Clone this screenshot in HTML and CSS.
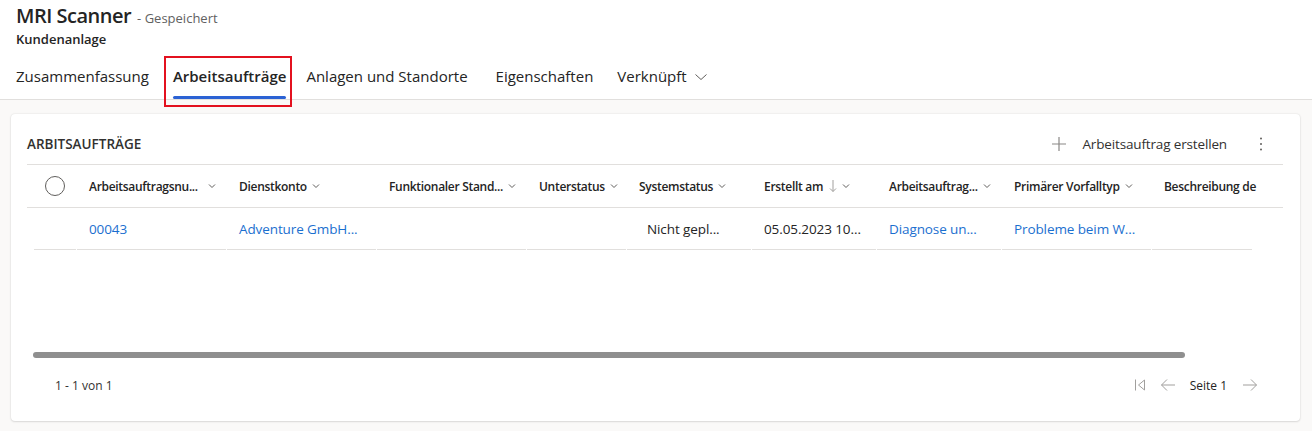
FILE: index.html
```html
<!DOCTYPE html>
<html lang="de">
<head>
<meta charset="utf-8">
<title>MRI Scanner - Kundenanlage</title>
<link rel="stylesheet" href="styles.css">
</head>
<body>
<header class="page-header">
  <div class="title-row">
    <h1 class="record-title">MRI Scanner</h1>
    <span class="save-state">- Gespeichert</span>
  </div>
  <div class="entity-name">Kundenanlage</div>
  <nav class="tabs">
    <a class="tab">Zusammenfassung</a>
    <a class="tab active">Arbeitsaufträge<span class="highlight"></span></a>
    <a class="tab">Anlagen und Standorte</a>
    <a class="tab">Eigenschaften</a>
    <a class="tab">Verknüpft
      <svg class="tab-chevron" width="12" height="12" viewBox="0 0 12 12"><path d="M0.5 3.5 L6 8.5 L11.5 3.5" fill="none" stroke="#605e5c" stroke-width="1"/></svg>
    </a>
  </nav>
</header>

<main class="content">
  <section class="card">
    <div class="toolbar">
      <h2 class="card-title">ARBITSAUFTRÄGE</h2>
      <button class="cmd">
        <svg width="16" height="16" viewBox="0 0 16 16"><path d="M8 1 V15 M1 8 H15" stroke="#8a8886" stroke-width="1.2" fill="none"/></svg>
        <span>Arbeitsauftrag erstellen</span>
      </button>
      <button class="more">
        <svg width="4" height="16" viewBox="0 0 4 16"><circle cx="2" cy="2.5" r="1" fill="#605e5c"/><circle cx="2" cy="8" r="1" fill="#605e5c"/><circle cx="2" cy="13.5" r="1" fill="#605e5c"/></svg>
      </button>
    </div>

    <div class="grid-head">
      <div class="viewport">
        <div class="row">
          <div class="cell col-check"><span class="check"></span></div>
          <div class="cell w150"><span class="h-text">Arbeitsauftragsnu...</span><svg class="chev wide" width="8" height="8" viewBox="0 0 8 8"><path d="M1 2.5 L4 5.5 L7 2.5" fill="none" stroke="#605e5c"/></svg></div>
          <div class="cell w150"><span class="h-text">Dienstkonto</span><svg class="chev" width="8" height="8" viewBox="0 0 8 8"><path d="M1 2.5 L4 5.5 L7 2.5" fill="none" stroke="#605e5c"/></svg></div>
          <div class="cell w150"><span class="h-text">Funktionaler Stand...</span><svg class="chev" width="8" height="8" viewBox="0 0 8 8"><path d="M1 2.5 L4 5.5 L7 2.5" fill="none" stroke="#605e5c"/></svg></div>
          <div class="cell w100"><span class="h-text">Unterstatus</span><svg class="chev" width="8" height="8" viewBox="0 0 8 8"><path d="M1 2.5 L4 5.5 L7 2.5" fill="none" stroke="#605e5c"/></svg></div>
          <div class="cell w125"><span class="h-text">Systemstatus</span><svg class="chev" width="8" height="8" viewBox="0 0 8 8"><path d="M1 2.5 L4 5.5 L7 2.5" fill="none" stroke="#605e5c"/></svg></div>
          <div class="cell w125"><span class="h-text">Erstellt am</span><svg class="sort" width="8" height="14" viewBox="0 0 8 14"><path d="M4 1 V12.5 M1 9.5 L4 12.5 L7 9.5" fill="none" stroke="#a19f9d" stroke-width="1"/></svg><svg class="chev" width="8" height="8" viewBox="0 0 8 8"><path d="M1 2.5 L4 5.5 L7 2.5" fill="none" stroke="#605e5c"/></svg></div>
          <div class="cell w125"><span class="h-text">Arbeitsauftrag...</span><svg class="chev" width="8" height="8" viewBox="0 0 8 8"><path d="M1 2.5 L4 5.5 L7 2.5" fill="none" stroke="#605e5c"/></svg></div>
          <div class="cell w150"><span class="h-text">Primärer Vorfalltyp</span><svg class="chev" width="8" height="8" viewBox="0 0 8 8"><path d="M1 2.5 L4 5.5 L7 2.5" fill="none" stroke="#605e5c"/></svg></div>
          <div class="cell w150"><span class="h-text">Beschreibung de</span></div>
        </div>
      </div>
    </div>

    <div class="grid-body">
      <div class="viewport">
        <div class="row">
          <div class="cell col-check"></div>
          <div class="cell w150"><a class="link">00043</a></div>
          <div class="cell w150"><a class="link">Adventure GmbH...</a></div>
          <div class="cell w150"></div>
          <div class="cell w100"></div>
          <div class="cell w125 option"><span>Nicht gepl...</span></div>
          <div class="cell w125"><span>05.05.2023 10...</span></div>
          <div class="cell w125"><a class="link">Diagnose un...</a></div>
          <div class="cell w150"><a class="link">Probleme beim W...</a></div>
          <div class="cell w100 last"></div>
        </div>
      </div>
    </div>

    <div class="hscroll"><div class="thumb"></div></div>

    <footer class="grid-footer">
      <span class="count">1 - 1 von 1</span>
      <div class="pager">
        <svg class="pg first" width="16" height="16" viewBox="0 0 16 16"><path d="M3.5 2.5 V13.5 M12.5 3 L6.5 8 L12.5 13 Z" fill="none" stroke="#a19f9d" stroke-width="1"/></svg>
        <svg class="pg back" width="16" height="16" viewBox="0 0 16 16"><path d="M15 8 H1.5 M7 2.5 L1.5 8 L7 13.5" fill="none" stroke="#a19f9d" stroke-width="1"/></svg>
        <span class="page-label">Seite 1</span>
        <svg class="pg next" width="16" height="16" viewBox="0 0 16 16"><path d="M1 8 H14.5 M9 2.5 L14.5 8 L9 13.5" fill="none" stroke="#a19f9d" stroke-width="1"/></svg>
      </div>
    </footer>
  </section>
</main>
</body>
</html>
```

FILE: styles.css
```css
* { box-sizing: border-box; margin: 0; padding: 0; }

body {
  font-family: "Open Sans", "Noto Sans", sans-serif;
  background: #faf9f8;
  color: #242424;
  width: 1312px;
  height: 431px;
  overflow: hidden;
}

/* ---------- header ---------- */
.page-header {
  background: #ffffff;
  border-bottom: 1px solid #e1dfdd;
  padding: 0 16px;
}

.title-row {
  display: flex;
  align-items: baseline;
  gap: 6px;
  height: 30px;
  padding-top: 3px;
}

.record-title {
  font-size: 20px;
  font-weight: 600;
  line-height: 26px;
  letter-spacing: -0.5px;
  color: #242424;
}

.save-state {
  font-size: 13px;
  color: #616161;
}

.entity-name {
  font-size: 13px;
  font-weight: 600;
  line-height: 18px;
  color: #242424;
}

.tabs {
  display: flex;
  height: 43px;
  margin: 8px 0 0 -12px;
}

.tab {
  position: relative;
  display: flex;
  align-items: flex-start;
  gap: 8px;
  padding: 10px 12px 0;
  font-size: 15px;
  line-height: 20px;
  color: #242424;
}

.tab.active {
  font-weight: 600;
  padding-right: 8px;
}

.tab.active + .tab {
  padding-right: 16px;
}

.tab.active::after {
  content: "";
  position: absolute;
  left: 12px;
  right: 8px;
  bottom: 0;
  height: 3px;
  border-radius: 2px;
  background: #2b62d4;
}

.tab .highlight {
  position: absolute;
  top: 0;
  bottom: -8px;
  left: 3px;
  right: 2px;
  border: 2px solid #e3111f;
  z-index: 2;
}

.tab-chevron {
  margin-top: 5px;
}

/* ---------- content ---------- */
.content {
  padding: 14px 12px 0 11px;
}

.card {
  background: #ffffff;
  border-radius: 4px;
  height: 307px;
  box-shadow: 0 0 2px rgba(0, 0, 0, 0.12), 0 1px 2px rgba(0, 0, 0, 0.10);
}

.toolbar {
  display: flex;
  align-items: center;
  height: 51px;
  padding-top: 9px;
  margin: 0 17px 0 16px;
  border-bottom: 1px solid #e1dfdd;
}

.card-title {
  font-size: 13.5px;
  font-weight: 600;
  color: #323130;
}

.cmd {
  margin-left: auto;
  display: flex;
  align-items: center;
  gap: 15px;
  background: none;
  border: none;
  font-family: inherit;
  font-size: 13.5px;
  letter-spacing: -0.15px;
  color: #323130;
}

.more {
  width: 32px;
  height: 32px;
  margin: 0 6px 0 18px;
  display: flex;
  align-items: center;
  justify-content: center;
  background: none;
  border: none;
}

/* ---------- grid ---------- */
.grid-head {
  height: 43px;
  margin: 0 17px 0 16px;
  border-bottom: 1px solid #e1dfdd;
}

.grid-body {
  height: 42px;
  margin: 0 17px 0 16px;
}

.viewport {
  margin-left: 7px;
  width: 1226px;
  height: 100%;
  overflow: hidden;
}

.row {
  display: flex;
  gap: 1px;
  height: 100%;
  width: max-content;
}

.cell {
  flex: none;
  display: flex;
  align-items: center;
  padding: 0 12px;
  white-space: nowrap;
  overflow: hidden;
}

.grid-body .cell {
  border-bottom: 1px solid #e1dfdd;
  font-size: 13.5px;
  letter-spacing: -0.1px;
  color: #242424;
}

.grid-head .cell {
  font-size: 12px;
  font-weight: 600;
  letter-spacing: -0.3px;
  color: #242424;
}

.col-check { width: 42px; justify-content: center; padding: 0; }
.w100 { width: 99px; }
.w125 { width: 124px; }
.w150 { width: 149px; }
.last { width: 100px; }

.check {
  width: 20px;
  height: 20px;
  border: 1px solid #605e5c;
  border-radius: 50%;
}

.h-text {
  flex: none;
}

.chev {
  margin-left: 5px;
  flex: none;
}

.chev.wide {
  margin-left: 10px;
}

.sort {
  margin-left: 6px;
  flex: none;
}

.option {
  padding-left: 20px;
}

.link {
  color: #1b6fcf;
}

/* ---------- scrollbar & footer ---------- */
.hscroll {
  margin: 102px 0 0 22px;
  height: 6px;
}

.thumb {
  width: 1152px;
  height: 6px;
  border-radius: 3px;
  background: #8f8f8f;
}

.grid-footer {
  display: flex;
  align-items: center;
  height: 63px;
  padding: 0 42px 9px 44px;
}

.count {
  font-size: 12px;
  color: #323130;
}

.pager {
  margin-left: auto;
  display: flex;
  align-items: center;
}

.pg.back { margin-left: 12px; }
.pg.next { margin-left: 15px; }

.page-label {
  margin-left: 14px;
  font-size: 12px;
  color: #242424;
}
```
